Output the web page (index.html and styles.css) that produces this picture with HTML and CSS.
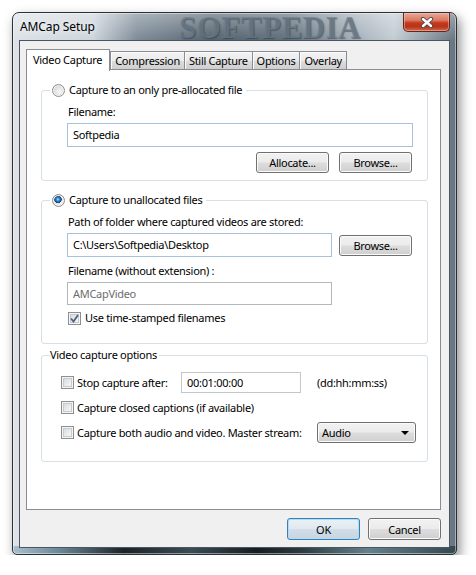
FILE: index.html
```html
<!DOCTYPE html>
<html>
<head>
<meta charset="utf-8">
<link rel="stylesheet" href="styles.css">
</head>
<body>
<div class="window">
  <div class="titlebar">
    <span class="title">AMCap Setup</span>
    <span class="watermark">SOFTPEDIA</span>
    <div class="close">
      <svg width="14" height="11" viewBox="0 0 14 11">
        <path d="M3 2 L11 9 M11 2 L3 9" stroke="#4a4a4a" stroke-width="4.2" stroke-linecap="round" fill="none"/>
        <path d="M3 2 L11 9 M11 2 L3 9" stroke="#ffffff" stroke-width="2.4" stroke-linecap="round" fill="none"/>
      </svg>
    </div>
  </div>
  <div class="client">
    <div class="tabs">
      <div class="tab active">Video Capture</div>
      <div class="tab">Compression</div>
      <div class="tab">Still Capture</div>
      <div class="tab">Options</div>
      <div class="tab">Overlay</div>
    </div>
    <div class="panel">
      <fieldset class="group g1">
        <legend><span class="radio"></span>Capture to an only pre-allocated file</legend>
        <div class="gbody b1">
          <div class="label">Filename:</div>
          <div class="input blue full">Softpedia</div>
          <div class="btnrow">
            <button class="btn">Allocate...</button>
            <button class="btn">Browse...</button>
          </div>
        </div>
      </fieldset>
      <fieldset class="group g2">
        <legend><span class="radio checked"></span>Capture to unallocated files</legend>
        <div class="gbody b2">
          <div class="label">Path of folder where captured videos are stored:</div>
          <div class="pathrow">
            <div class="input blue path">C:\Users\Softpedia\Desktop</div>
            <button class="btn">Browse...</button>
          </div>
          <div class="label spaced">Filename (without extension) :</div>
          <div class="input disabled path short">AMCapVideo</div>
          <div class="check-row"><span class="checkbox checked"><svg width="9" height="9" viewBox="0 0 9 9"><path d="M1 4.5 L3.5 7.5 L8 1" stroke="#4d6185" stroke-width="1.8" fill="none"/></svg></span>Use time-stamped filenames</div>
        </div>
      </fieldset>
      <fieldset class="group g3">
        <legend class="plain">Video capture options</legend>
        <div class="gbody b3">
          <div class="opt c1"><span class="checkbox"></span>Stop capture after:</div>
          <div class="input gray time">00:01:00:00</div>
          <div class="unit">(dd:hh:mm:ss)</div>
          <div class="opt span3"><span class="checkbox"></span>Capture closed captions (if available)</div>
          <div class="opt span2"><span class="checkbox"></span>Capture both audio and video. Master stream:</div>
          <div class="select">Audio<span class="arrow"></span></div>
        </div>
      </fieldset>
    </div>
    <div class="footer">
      <button class="btn default">OK</button>
      <button class="btn">Cancel</button>
    </div>
  </div>
</div>
</body>
</html>
```

FILE: styles.css
```css
html, body {
  margin: 0;
  background: #ffffff;
}
body {
  padding: 12px 0 0 12px;
  font-family: "Noto Sans", "Open Sans", sans-serif;
  font-size: 11px;
  letter-spacing: -0.3px;
  color: #000;
}
.window {
  position: relative;
  width: 445px;
  height: 543px;
  box-sizing: border-box;
  border: 1px solid #2a3036;
  border-radius: 7px 7px 5px 5px;
  padding: 0 6px 6px 6px;
  display: flex;
  flex-direction: column;
  box-shadow: 3px 5px 12px rgba(0,0,0,0.45), inset 0 0 0 1px rgba(255,255,255,0.45);
  background:
    linear-gradient(to bottom, rgba(255,255,255,0.35) 0, rgba(255,255,255,0) 27px),
    linear-gradient(to right, #a9bfcd 0%, #6d8a9a 10%, #1c2327 25%, #3b4c55 40%, #161d21 55%, #2c3a41 65%, #64818c 80%, #34474f 100%) left bottom / 100% 8px no-repeat,
    linear-gradient(to right, #dce2e7 0%, #cdd5dc 18%, #7d8b97 28%, #56646f 45%, #5f6e7a 62%, #a6b2bc 78%, #c3ccd3 86%, #65737f 100%);
}
.titlebar {
  position: relative;
  height: 27px;
  display: flex;
  align-items: center;
  padding-left: 1px;
}
.title {
  font-size: 12px;
  letter-spacing: -0.1px;
  color: #000;
  position: relative;
  z-index: 2;
  text-shadow: 0 0 6px rgba(255,255,255,0.9);
}
.watermark {
  position: absolute;
  left: 160px;
  top: 1px;
  font-family: "Liberation Serif", serif;
  font-weight: bold;
  font-size: 31px;
  letter-spacing: 0.5px;
  line-height: 27px;
  color: rgba(108,124,138,0.7);
  text-shadow: 1px 1px 1px rgba(40,52,62,0.5);
}
.close {
  position: absolute;
  top: 0;
  right: 0;
  width: 47px;
  height: 19px;
  box-sizing: border-box;
  border: 1px solid #5a2a22;
  border-top: none;
  border-radius: 0 0 5px 5px;
  background: linear-gradient(to bottom, #e9a796 0%, #dc7a62 40%, #c4391c 55%, #b8341a 75%, #d5674a 100%);
  box-shadow: inset 0 0 0 1px rgba(255,210,200,0.45);
  display: flex;
  align-items: center;
  justify-content: center;
}
.client {
  flex: 1;
  border: 1px solid #4a555e;
  background: #f0f0f0;
  padding: 8px 8px 7px 6px;
  display: flex;
  flex-direction: column;
}
.tabs {
  display: flex;
  align-items: flex-end;
  height: 22px;
  margin-bottom: -2px;
  position: relative;
  z-index: 1;
}
.tab {
  height: 19px;
  box-sizing: border-box;
  border: 1px solid #898c95;
  border-left: none;
  margin-bottom: 1px;
  padding: 0 4px;
  line-height: 17px;
  background: linear-gradient(to bottom, #f2f2f2 0%, #ebebeb 50%, #dddddd 51%, #cfcfcf 100%);
  box-shadow: inset 1px 1px 0 #fbfbfb;
  white-space: nowrap;
}
.tab.active {
  height: 22px;
  margin-bottom: 0;
  border: 1px solid #898c95;
  border-bottom: none;
  background: #ffffff;
  box-shadow: none;
  padding: 0 7px 0 6px;
  line-height: 19px;
  margin-right: -1px;
  position: relative;
}
.tab.active + .tab {
  border-left: 1px solid #898c95;
  margin-left: 1px;
}
.panel {
  flex: 1;
  border: 1px solid #898c95;
  background: #ffffff;
  display: flex;
  flex-direction: column;
}
.group {
  margin: 0 12px 0 14px;
  padding: 0;
  border: 1px solid #d5dfe5;
  border-radius: 3px;
  min-width: 0;
}
.g1 { margin-top: 12px; }
.g2 { margin-top: 11px; }
.g3 { margin-top: 3px; }
legend {
  margin-left: 8px;
  padding: 0 4px 0 2px;
  line-height: 16px;
  display: flex;
  align-items: center;
  gap: 4px;
}
legend.plain {
  padding: 0 2px 0 0;
}
.gbody {
  display: flex;
  flex-direction: column;
}
.b1 { padding: 6px 14px 7px 25px; }
.b2 { padding: 6px 14px 17px 25px; }
.label {
  line-height: 16px;
  padding-left: 1px;
}
.label.spaced { margin-top: 6px; }
.input {
  box-sizing: border-box;
  height: 24px;
  line-height: 22px;
  padding-left: 5px;
  margin-top: 3px;
  background: #fff;
  border: 1px solid #a9bfd6;
  white-space: nowrap;
}
.input.blue {
  border-color: #a7c2dc;
}
.input.disabled {
  border-color: #b2b7ba;
  color: #6d6d6d;
  height: 23px;
  line-height: 21px;
}
.path { width: 265px; }
.btnrow {
  display: flex;
  justify-content: flex-end;
  gap: 10px;
  margin-top: 5px;
  padding-right: 1px;
}
.btn {
  width: 73px;
  height: 21px;
  box-sizing: border-box;
  border: 1px solid #707070;
  border-radius: 3px;
  background: linear-gradient(to bottom, #f2f2f2 0%, #ebebeb 48%, #dddddd 52%, #cfcfcf 100%);
  box-shadow: inset 0 0 0 1px #fbfbfb;
  font-family: inherit;
  font-size: 11px;
  letter-spacing: -0.3px;
  color: #000;
  padding: 0;
  line-height: 18px;
}
.pathrow {
  display: flex;
  align-items: center;
  gap: 7px;
}
.pathrow .input { margin-top: 3px; }
.pathrow .btn { margin-top: 4px; }
.check-row {
  margin-top: 5px;
  line-height: 16px;
  display: flex;
  align-items: center;
  gap: 4px;
  padding-left: 1px;
}
.radio {
  width: 13px;
  height: 13px;
  box-sizing: border-box;
  border-radius: 50%;
  border: 1px solid #8e8f8f;
  background: radial-gradient(circle at 60% 60%, #f6f6f6 0%, #e3e3e3 45%, #c4c4c4 100%);
  box-shadow: inset 0 0 0 1px #f4f4f4;
  flex: none;
}
.radio.checked {
  background:
    radial-gradient(circle at 45% 40%, #b9e3ff 0, #3a8ed6 1.5px, #0c3f7b 3.5px, rgba(12,63,123,0) 4px),
    radial-gradient(circle at 60% 60%, #f6f6f6 0%, #e3e3e3 45%, #c4c4c4 100%);
}
.checkbox {
  width: 13px;
  height: 13px;
  box-sizing: border-box;
  border: 1px solid #8e8f8f;
  background: linear-gradient(135deg, #cfd3d8 0%, #eeeeee 60%, #f8f8f8 100%);
  box-shadow: inset 0 0 0 1px #f4f4f4, inset 0 0 0 2px #c6cbd1;
  display: inline-flex;
  align-items: center;
  justify-content: center;
  flex: none;
}
.b3 {
  display: grid;
  grid-template-columns: 120px 136px auto;
  grid-auto-rows: 21px;
  row-gap: 4px;
  align-items: center;
  padding: 9px 12px 18px 19px;
}
.opt {
  display: flex;
  align-items: center;
  gap: 3px;
  white-space: nowrap;
}
.span3 { grid-column: 1 / 4; }
.span2 { grid-column: 1 / 3; }
.input.gray {
  border-color: #c4c7c9;
}
.time {
  width: 120px;
  height: 21px;
  line-height: 19px;
  margin-top: 0;
  padding-left: 5px;
}
.unit { padding-left: 0; }
.select {
  width: 99px;
  height: 21px;
  box-sizing: border-box;
  border: 1px solid #707070;
  border-radius: 3px;
  background: linear-gradient(to bottom, #f2f2f2 0%, #ebebeb 48%, #dddddd 52%, #cfcfcf 100%);
  box-shadow: inset 0 0 0 1px #fbfbfb;
  padding: 0 6px 0 4px;
  line-height: 19px;
  display: flex;
  align-items: center;
  justify-content: space-between;
}
.arrow {
  width: 0;
  height: 0;
  border-left: 4px solid transparent;
  border-right: 4px solid transparent;
  border-top: 4px solid #000;
}
.footer {
  display: flex;
  justify-content: flex-end;
  gap: 8px;
  margin-top: 8px;
}
.footer .btn { height: 22px; line-height: 19px; }
.btn.default {
  border-color: #3c7fb1;
  background: linear-gradient(to bottom, #eaf1f6 0%, #e0e9f0 48%, #d1dde7 52%, #c8d6e2 100%);
  box-shadow: inset 0 0 0 1px #a9def7;
}
```
